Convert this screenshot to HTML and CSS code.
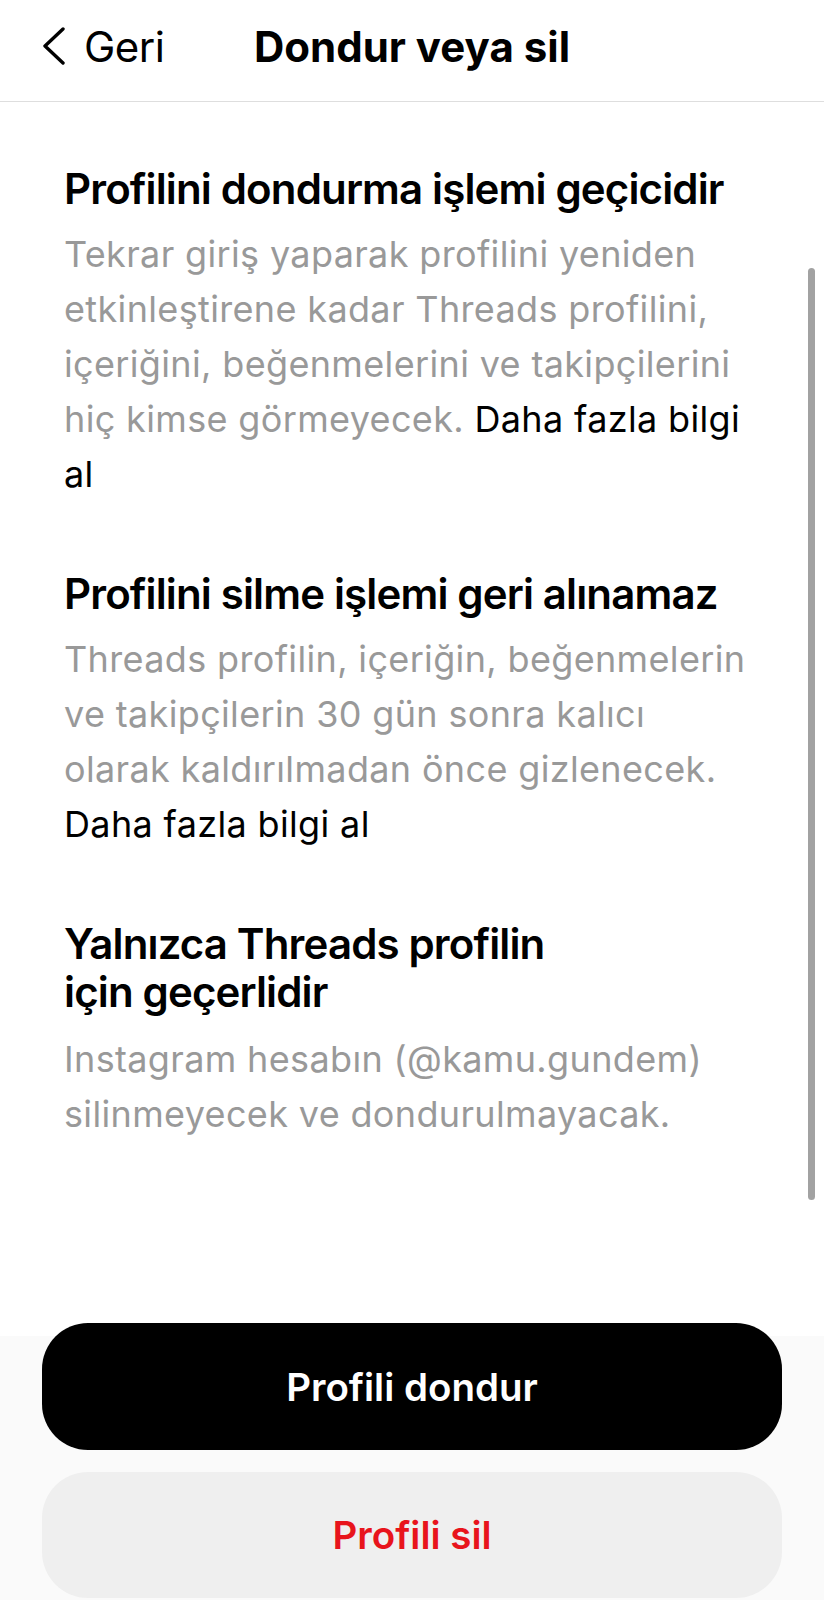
FILE: index.html
```html
<!DOCTYPE html>
<html lang="tr">
<head>
<meta charset="utf-8">
<title>Dondur veya sil</title>
<link rel="stylesheet" href="styles.css">
</head>
<body>
<div class="page">
  <header class="nav">
    <div class="nav-left">
      <a class="back" href="#">
        <svg class="chev" width="24" height="38" viewBox="0 0 24 38" aria-hidden="true">
          <path d="M21 2 L3 19 L21 36" fill="none" stroke="#000" stroke-width="3.4" stroke-linecap="round" stroke-linejoin="round"/>
        </svg>
        <span>Geri</span>
      </a>
    </div>
    <h1 class="nav-title">Dondur veya sil</h1>
    <div class="nav-right"></div>
  </header>

  <main class="content">
    <section class="block">
      <h2 class="block-title">Profilini dondurma işlemi geçicidir</h2>
      <p class="block-text">Tekrar giriş yaparak profilini yeniden<br>etkinleştirene kadar Threads profilini,<br>içeriğini, beğenmelerini ve takipçilerini<br>hiç kimse görmeyecek. <a class="more" href="#">Daha fazla bilgi<br>al</a></p>
    </section>
    <section class="block">
      <h2 class="block-title">Profilini silme işlemi geri alınamaz</h2>
      <p class="block-text">Threads profilin, içeriğin, beğenmelerin<br>ve takipçilerin 30 gün sonra kalıcı<br>olarak kaldırılmadan önce gizlenecek.<br><a class="more" href="#">Daha fazla bilgi al</a></p>
    </section>
    <section class="block">
      <h2 class="block-title">Yalnızca Threads profilin<br>için geçerlidir</h2>
      <p class="block-text block-text-last">Instagram hesabın (@kamu.gundem)<br>silinmeyecek ve dondurulmayacak.</p>
    </section>
    <div class="scrollbar"></div>
  </main>

  <footer class="actions">
    <button class="btn btn-primary" type="button">Profili dondur</button>
    <button class="btn btn-danger" type="button">Profili sil</button>
  </footer>
</div>
</body>
</html>
```

FILE: styles.css
```css
* { box-sizing: border-box; }

html, body {
  margin: 0;
  padding: 0;
  background: #ffffff;
}

body {
  font-family: Inter, "Noto Sans", "Liberation Sans", sans-serif;
  color: #000;
}

.page {
  width: 824px;
  height: 1600px;
  display: flex;
  flex-direction: column;
  overflow: hidden;
}

.nav {
  display: grid;
  grid-template-columns: 1fr auto 1fr;
  align-items: start;
  padding: 23px 0 30px;
  border-bottom: 1px solid #dedede;
  height: 102px;
}

.nav-left {
  padding-left: 42px;
}

.back {
  display: inline-flex;
  align-items: center;
  gap: 18px;
  color: #000;
  text-decoration: none;
  font-size: 42px;
  line-height: 48px;
  font-weight: 400;
  letter-spacing: -0.5px;
}

.chev {
  display: block;
  margin-top: -2px;
}

.nav-title {
  margin: 0;
  font-size: 42px;
  line-height: 48px;
  font-weight: 700;
  letter-spacing: 0;
}

.content {
  position: relative;
  flex: 1;
  padding: 63px 40px 0 64px;
  display: flex;
  flex-direction: column;
  gap: 68px;
}

.block-title {
  margin: 0;
  font-size: 42px;
  line-height: 48px;
  font-weight: 600;
  letter-spacing: -0.85px;
}

.block-text {
  margin: 14px 0 0;
  font-size: 36px;
  line-height: 55px;
  font-weight: 400;
  color: #999999;
  letter-spacing: 0.35px;
}

.block-text-last {
  margin-top: 16px;
}

.more {
  color: #000;
  text-decoration: none;
}

.scrollbar {
  position: absolute;
  right: 9px;
  top: 166px;
  width: 7px;
  height: 932px;
  border-radius: 4px;
  background: #a2a2a2;
}

.actions {
  display: flex;
  flex-direction: column;
  gap: 22px;
  padding: 0 42px 2px;
  background: linear-gradient(#ffffff 0, #ffffff 13px, #fafafa 13px);
}

.btn {
  display: block;
  width: 100%;
  border: 0;
  border-radius: 46px;
  font-family: Inter, "Noto Sans", "Liberation Sans", sans-serif;
  font-size: 38.5px;
  font-weight: 600;
  letter-spacing: 0;
  cursor: pointer;
}

.btn-primary {
  height: 127px;
  background: #000;
  color: #fff;
}

.btn-danger {
  height: 126px;
  background: #efefef;
  color: #e8141c;
}
```
